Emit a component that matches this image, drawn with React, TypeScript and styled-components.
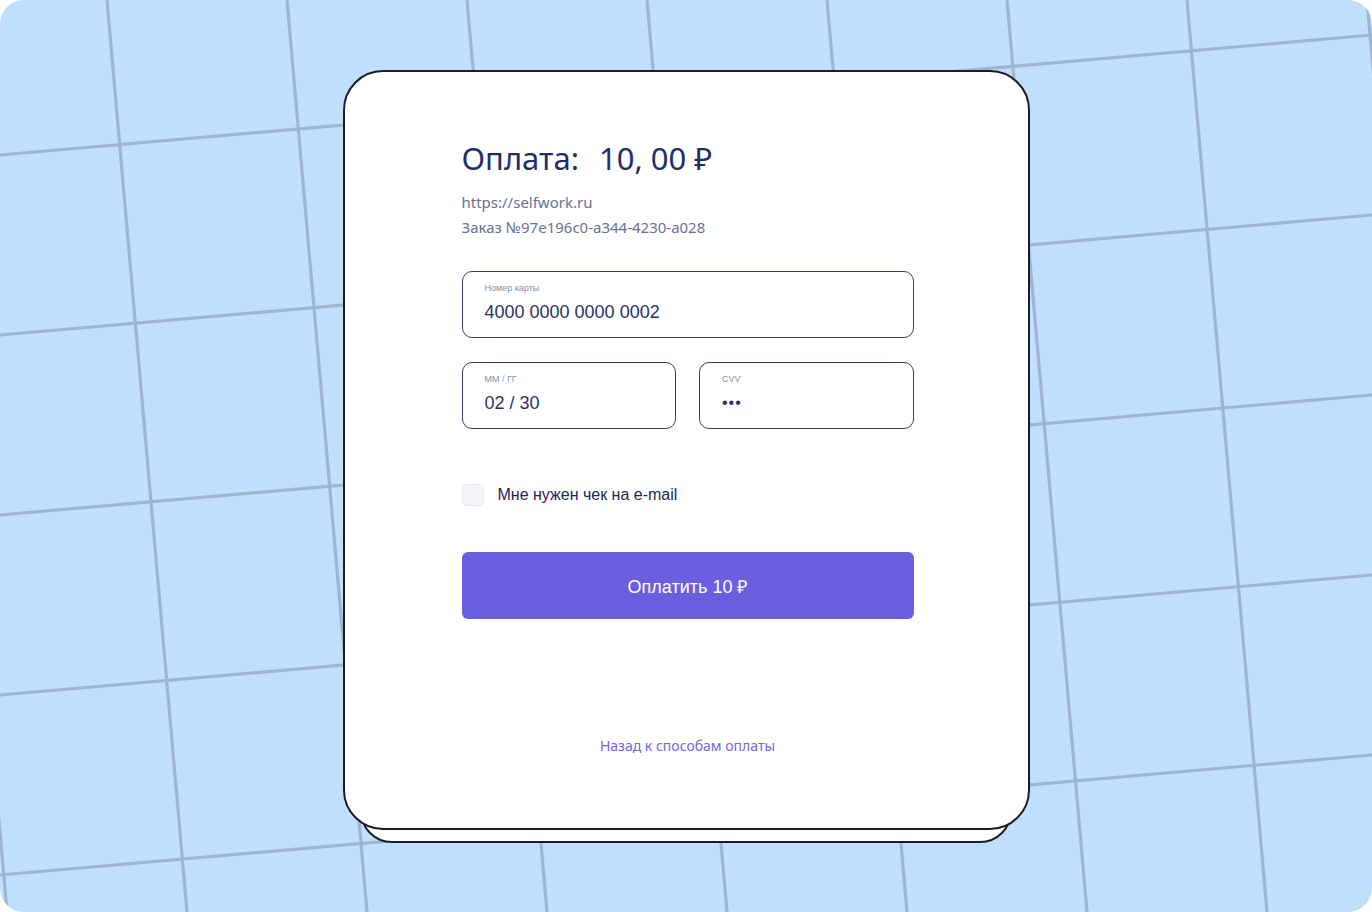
import React from 'react'
import styled, { createGlobalStyle } from 'styled-components'

const GlobalStyle = createGlobalStyle`
  html, body {
    margin: 0;
    padding: 0;
    background: #ffffff;
  }
  * {
    box-sizing: border-box;
  }
`

const verticals = [-1, 0, 1, 2, 3, 4, 5, 6, 7, 8].map((k) => 107 + 180 * k)
const horizontals = [-1, 0, 1, 2, 3, 4, 5, 6].map((k) => 155 + 180 * k)

const GridLines = () => (
  <GridSvg viewBox="0 0 1372 912" preserveAspectRatio="none">
    {verticals.map((x) => (
      <line key={'v' + x} x1={x} y1={0} x2={x + 80} y2={912} />
    ))}
    {horizontals.map((y) => (
      <line key={'h' + y} x1={0} y1={y} x2={1372} y2={y - 120} />
    ))}
  </GridSvg>
)

export default function App() {
  return (
    <>
      <GlobalStyle />
      <Frame>
        <GridLines />
        <CardStack>
          <BackCard />
          <Card>
            <Title>
              Оплата:<Amount>10, 00 ₽</Amount>
            </Title>
            <MetaLine>https://selfwork.ru</MetaLine>
            <MetaLine>Заказ №97e196c0-a344-4230-a028</MetaLine>

            <Fields>
              <Field>
                <FieldLabel>Номер карты</FieldLabel>
                <FieldValue>4000 0000 0000 0002</FieldValue>
              </Field>
              <FieldRow>
                <Field>
                  <FieldLabel>ММ / ГГ</FieldLabel>
                  <FieldValue>02 / 30</FieldValue>
                </Field>
                <Field>
                  <FieldLabel>CVV</FieldLabel>
                  <FieldValue $dots>•••</FieldValue>
                </Field>
              </FieldRow>
            </Fields>

            <CheckRow>
              <CheckBox />
              <CheckText>Мне нужен чек на e-mail</CheckText>
            </CheckRow>

            <PayButton>Оплатить 10 ₽</PayButton>

            <BackLink>Назад к способам оплаты</BackLink>
          </Card>
        </CardStack>
      </Frame>
    </>
  )
}

const Frame = styled.div`
  position: relative;
  width: 1372px;
  height: 912px;
  background: #c0defd;
  border-radius: 24px;
  overflow: hidden;
  display: flex;
  justify-content: center;
  align-items: flex-start;
  padding-top: 70px;
`

const GridSvg = styled.svg`
  position: absolute;
  inset: 0;
  width: 100%;
  height: 100%;
  stroke: #9fb4d0;
  stroke-width: 3.2;
`

const CardStack = styled.div`
  position: relative;
  width: 687px;
  height: 760px;
`

const BackCard = styled.div`
  position: absolute;
  left: 17px;
  right: 18px;
  top: 40px;
  bottom: -13px;
  background: #ffffff;
  border: 2px solid #1c1c28;
  border-radius: 32px;
`

const Card = styled.div`
  position: relative;
  height: 100%;
  background: #ffffff;
  border: 2px solid #1c1c28;
  border-radius: 40px;
  padding: 68px 114px 72px 117px;
  display: flex;
  flex-direction: column;
  font-family: 'Noto Sans', 'Liberation Sans', sans-serif;
`

const Title = styled.h1`
  margin: 0 0 14px;
  font-size: 31px;
  line-height: 36px;
  font-weight: 400;
  color: #252d66;
  display: flex;
`

const Amount = styled.span`
  margin-left: 20px;
`

const MetaLine = styled.div`
  font-size: 15px;
  line-height: 25px;
  color: #6a7290;
`

const Fields = styled.div`
  margin-top: 31px;
  display: flex;
  flex-direction: column;
  gap: 24px;
`

const FieldRow = styled.div`
  display: grid;
  grid-template-columns: 1fr 1fr;
  gap: 23px;
`

const Field = styled.div`
  height: 67px;
  border: 1.5px solid #353d74;
  border-radius: 10px;
  padding: 10px 22px 0;
  font-family: 'Liberation Sans', Arial, sans-serif;
`

const FieldLabel = styled.div`
  font-size: 9px;
  line-height: 12px;
  color: #8a8fa6;
`

const FieldValue = styled.div<{ $dots?: boolean }>`
  margin-top: 7px;
  font-size: ${(p) => (p.$dots ? '16px' : '18px')};
  line-height: 22px;
  letter-spacing: ${(p) => (p.$dots ? '1px' : '0')};
  color: #2a3166;
`

const CheckRow = styled.label`
  margin-top: 55px;
  display: flex;
  align-items: center;
  gap: 14px;
`

const CheckBox = styled.span`
  width: 22px;
  height: 22px;
  border-radius: 5px;
  background: #f3f5f9;
  border: 1px solid #e6e9ef;
`

const CheckText = styled.span`
  font-family: 'Liberation Sans', Arial, sans-serif;
  font-size: 16px;
  color: #1f2550;
`

const PayButton = styled.button`
  margin-top: 46px;
  height: 67px;
  width: 100%;
  border: none;
  border-radius: 6px;
  background: #6b5fe0;
  color: #ffffff;
  font-family: 'Liberation Sans', Arial, sans-serif;
  font-size: 18px;
  cursor: pointer;
`

const BackLink = styled.a`
  margin-top: auto;
  align-self: center;
  font-size: 14px;
  line-height: 20px;
  color: #7466e8;
  cursor: pointer;
`
